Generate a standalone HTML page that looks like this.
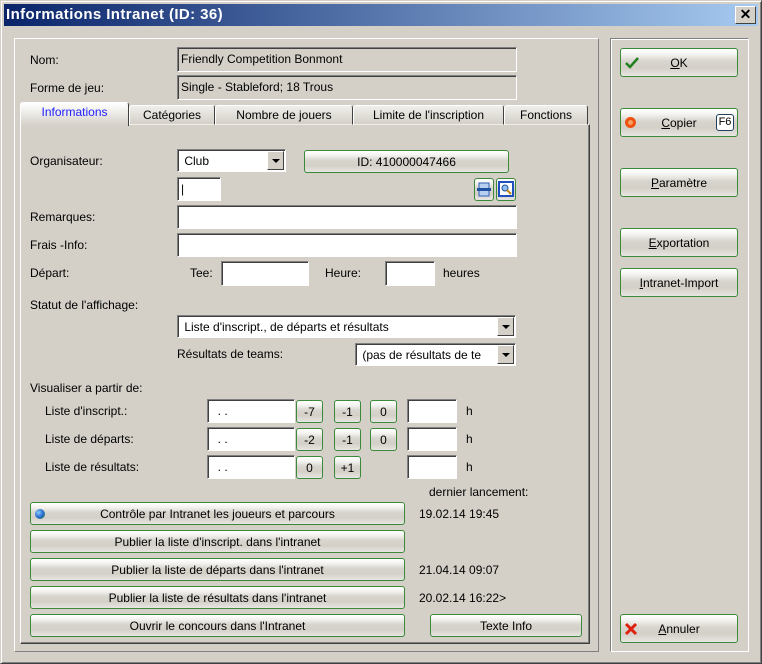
<!DOCTYPE html>
<html><head><meta charset="utf-8"><style>
*{box-sizing:border-box;margin:0;padding:0}
body{width:762px;height:664px;overflow:hidden;background:#d4d0c8;font-family:"Liberation Sans",sans-serif;font-size:12px;color:#000;position:relative}
.a{position:absolute}
.t{position:absolute;white-space:nowrap;line-height:14px}
.in{position:absolute;background:#fff;border:1px solid;border-color:#808080 #fff #fff #808080;box-shadow:inset 1px 1px 0 #404040;padding:4px 0 0 3px;white-space:nowrap;overflow:hidden;line-height:15px}
.dis{background:#d4d0c8}
.b{position:absolute;border:1px solid #3a8a3a;border-radius:3px;background:linear-gradient(#fff 0%,#f4f3f0 20%,#d8d5ce 45%,#d4d0c8 70%,#e8e6e2 100%);text-align:center;white-space:nowrap;line-height:22px}
.dd{position:absolute;right:1px;top:1px;bottom:1px;width:17px;background:#d4d0c8;border:1px solid;border-color:#fff #404040 #404040 #fff}
.dd:after{content:"";position:absolute;left:4px;top:7px;border-left:4px solid transparent;border-right:4px solid transparent;border-top:4px solid #000}
.tab{position:absolute;top:105px;height:20px;border:1px solid;border-color:#fff #404040 transparent #fff;border-radius:3px 3px 0 0;background:linear-gradient(#f0efec,#d4d0c8);text-align:center;line-height:18px}
u{text-decoration:underline}
</style></head><body>
<div class="a" style="left:0;top:0;width:762px;height:664px;border:1px solid;border-color:#d4d0c8 #404040 #404040 #d4d0c8;box-shadow:inset 1px 1px 0 #fff,inset -1px -1px 0 #808080"></div>
<div class="a" style="left:4px;top:4px;width:754px;height:22px;background:linear-gradient(90deg,#0a246a,#a6caf0)"></div>
<div class="t" style="left:6px;top:7px;color:#fff;font-weight:bold;font-size:15px;line-height:16px;letter-spacing:0.4px">Informations Intranet (ID: 36)</div>
<div class="a" style="left:735px;top:6px;width:21px;height:18px;background:#d4d0c8;border:1px solid;border-color:#fff #404040 #404040 #fff;text-align:center;font-weight:bold;font-size:14px;line-height:15px">✕</div>

<div class="a" style="left:14px;top:38px;width:585px;height:614px;border:1px solid;border-color:#fff #808080 #808080 #fff"></div>
<div class="a" style="left:610px;top:38px;width:139px;height:614px;border:1px solid;border-color:#808080 #fff #fff #808080;box-shadow:inset 1px 1px 0 #fff"></div>

<div class="t" style="left:30px;top:53px">Nom:</div>
<div class="in dis" style="left:177px;top:47px;width:340px;height:25px">Friendly Competition Bonmont</div>
<div class="t" style="left:30px;top:81px">Forme de jeu:</div>
<div class="in dis" style="left:177px;top:75px;width:340px;height:25px">Single - Stableford; 18 Trous</div>

<div class="a" style="left:20px;top:124px;width:570px;height:520px;border:1px solid;border-color:#fff #404040 #404040 #fff;box-shadow:inset -1px -1px 0 #808080"></div>
<div class="tab" style="left:129px;width:86px">Catégories</div>
<div class="tab" style="left:215px;width:138px">Nombre de jouers</div>
<div class="tab" style="left:353px;width:151px">Limite de l'inscription</div>
<div class="tab" style="left:504px;width:84px">Fonctions</div>
<div class="tab" style="left:20px;top:102px;width:109px;height:24px;border-bottom:none;background:linear-gradient(#fff,#d4d0c8);color:#2020ff;line-height:18px">Informations</div>

<div class="t" style="left:30px;top:154px">Organisateur:</div>
<div class="in" style="left:177px;top:149px;width:109px;height:23px">&nbsp;Club<div class="dd"></div></div>
<div class="b" style="left:304px;top:150px;width:205px;height:23px">ID: 410000047466</div>
<div class="in" style="left:177px;top:177px;width:44px;height:24px">|</div>
<div class="b" style="left:474px;top:178px;width:20px;height:23px"><svg width="18" height="20" style="display:block"><rect x="4" y="4" width="10" height="13" fill="#b8d0f0" stroke="#3060b0"/><rect x="2" y="9" width="14" height="3" fill="#2050a0"/></svg></div>
<div class="b" style="left:496px;top:178px;width:20px;height:23px"><svg width="18" height="20" style="display:block"><rect x="2" y="3" width="14" height="14" fill="#fff" stroke="#2050c0" stroke-width="2"/><circle cx="8" cy="9" r="3" fill="#90c0f0" stroke="#2050a0"/><line x1="10" y1="11" x2="14" y2="15" stroke="#c08000" stroke-width="2"/></svg></div>

<div class="t" style="left:30px;top:210px">Remarques:</div>
<div class="in" style="left:177px;top:205px;width:340px;height:24px"></div>
<div class="t" style="left:30px;top:238px">Frais -Info:</div>
<div class="in" style="left:177px;top:233px;width:340px;height:24px"></div>
<div class="t" style="left:30px;top:266px">Départ:</div>
<div class="t" style="left:190px;top:266px">Tee:</div>
<div class="in" style="left:221px;top:261px;width:88px;height:25px"></div>
<div class="t" style="left:325px;top:266px">Heure:</div>
<div class="in" style="left:385px;top:261px;width:50px;height:25px"></div>
<div class="t" style="left:443px;top:266px">heures</div>

<div class="t" style="left:30px;top:298px">Statut de l'affichage:</div>
<div class="in" style="left:177px;top:315px;width:339px;height:23px">&nbsp;Liste d'inscript., de départs et résultats<div class="dd"></div></div>
<div class="t" style="left:177px;top:347px">Résultats de teams:</div>
<div class="in" style="left:355px;top:343px;width:161px;height:23px">&nbsp;(pas de résultats de te<div class="dd"></div></div>

<div class="t" style="left:30px;top:381px">Visualiser a partir de:</div>
<div class="t" style="left:45px;top:404px">Liste d'inscript.:</div>
<div class="t" style="left:45px;top:432px">Liste de départs:</div>
<div class="t" style="left:45px;top:460px">Liste de résultats:</div>

<div class="in" style="left:207px;top:399px;width:88px;height:24px">&nbsp; . .</div>
<div class="b" style="left:296px;top:400px;width:27px;height:23px">-7</div>
<div class="b" style="left:334px;top:400px;width:27px;height:23px">-1</div>
<div class="b" style="left:370px;top:400px;width:27px;height:23px">0</div>
<div class="in" style="left:407px;top:399px;width:50px;height:24px"></div>
<div class="t" style="left:466px;top:404px">h</div>

<div class="in" style="left:207px;top:427px;width:88px;height:24px">&nbsp; . .</div>
<div class="b" style="left:296px;top:428px;width:27px;height:23px">-2</div>
<div class="b" style="left:334px;top:428px;width:27px;height:23px">-1</div>
<div class="b" style="left:370px;top:428px;width:27px;height:23px">0</div>
<div class="in" style="left:407px;top:427px;width:50px;height:24px"></div>
<div class="t" style="left:466px;top:432px">h</div>

<div class="in" style="left:207px;top:455px;width:88px;height:24px">&nbsp; . .</div>
<div class="b" style="left:296px;top:456px;width:27px;height:23px">0</div>
<div class="b" style="left:334px;top:456px;width:27px;height:23px">+1</div>
<div class="in" style="left:407px;top:455px;width:50px;height:24px"></div>
<div class="t" style="left:466px;top:460px">h</div>

<div class="t" style="left:429px;top:485px">dernier lancement:</div>
<div class="b" style="left:30px;top:502px;width:375px;height:23px">Contrôle par Intranet les joueurs et parcours<div class="a" style="left:4px;top:6px;width:10px;height:10px;border-radius:50%;background:radial-gradient(circle at 35% 35%,#8cf 0,#2a6ad0 50%,#1a8030 100%)"></div></div>
<div class="t" style="left:419px;top:507px">19.02.14 19:45</div>
<div class="b" style="left:30px;top:530px;width:375px;height:23px">Publier la liste d'inscript. dans l'intranet</div>
<div class="b" style="left:30px;top:558px;width:375px;height:23px">Publier la liste de départs dans l'intranet</div>
<div class="t" style="left:419px;top:563px">21.04.14 09:07</div>
<div class="b" style="left:30px;top:586px;width:375px;height:23px">Publier la liste de résultats dans l'intranet</div>
<div class="t" style="left:419px;top:591px">20.02.14 16:22&gt;</div>
<div class="b" style="left:30px;top:614px;width:375px;height:23px">Ouvrir le concours dans l'Intranet</div>
<div class="b" style="left:430px;top:614px;width:152px;height:23px">Texte Info</div>

<div class="b" style="left:620px;top:48px;width:118px;height:29px;line-height:28px"><u>O</u>K<svg class="a" style="left:3px;top:7px" width="16" height="14"><path d="M2 7 L6 11 L14 2" stroke="#208020" stroke-width="2.5" fill="none"/></svg></div>
<div class="b" style="left:620px;top:108px;width:118px;height:29px;line-height:28px"><u>C</u>opier<div class="a" style="left:4px;top:8px;width:11px;height:11px;border-radius:50%;border:3px solid #f05010;background:#f8a060"></div><div class="a" style="right:3px;top:5px;width:18px;height:17px;border:1px solid #204060;border-radius:3px;background:#fff;font-size:11px;line-height:15px">F6</div></div>
<div class="b" style="left:620px;top:168px;width:118px;height:29px;line-height:28px"><u>P</u>aramètre</div>
<div class="b" style="left:620px;top:228px;width:118px;height:29px;line-height:28px"><u>E</u>xportation</div>
<div class="b" style="left:620px;top:268px;width:118px;height:29px;line-height:28px"><u>I</u>ntranet-Import</div>
<div class="b" style="left:620px;top:614px;width:118px;height:29px;line-height:28px"><u>A</u>nnuler<svg class="a" style="left:3px;top:7px" width="14" height="14"><path d="M2 2 L12 12 M12 2 L2 12" stroke="#e02010" stroke-width="3"/></svg></div>
</body></html>
